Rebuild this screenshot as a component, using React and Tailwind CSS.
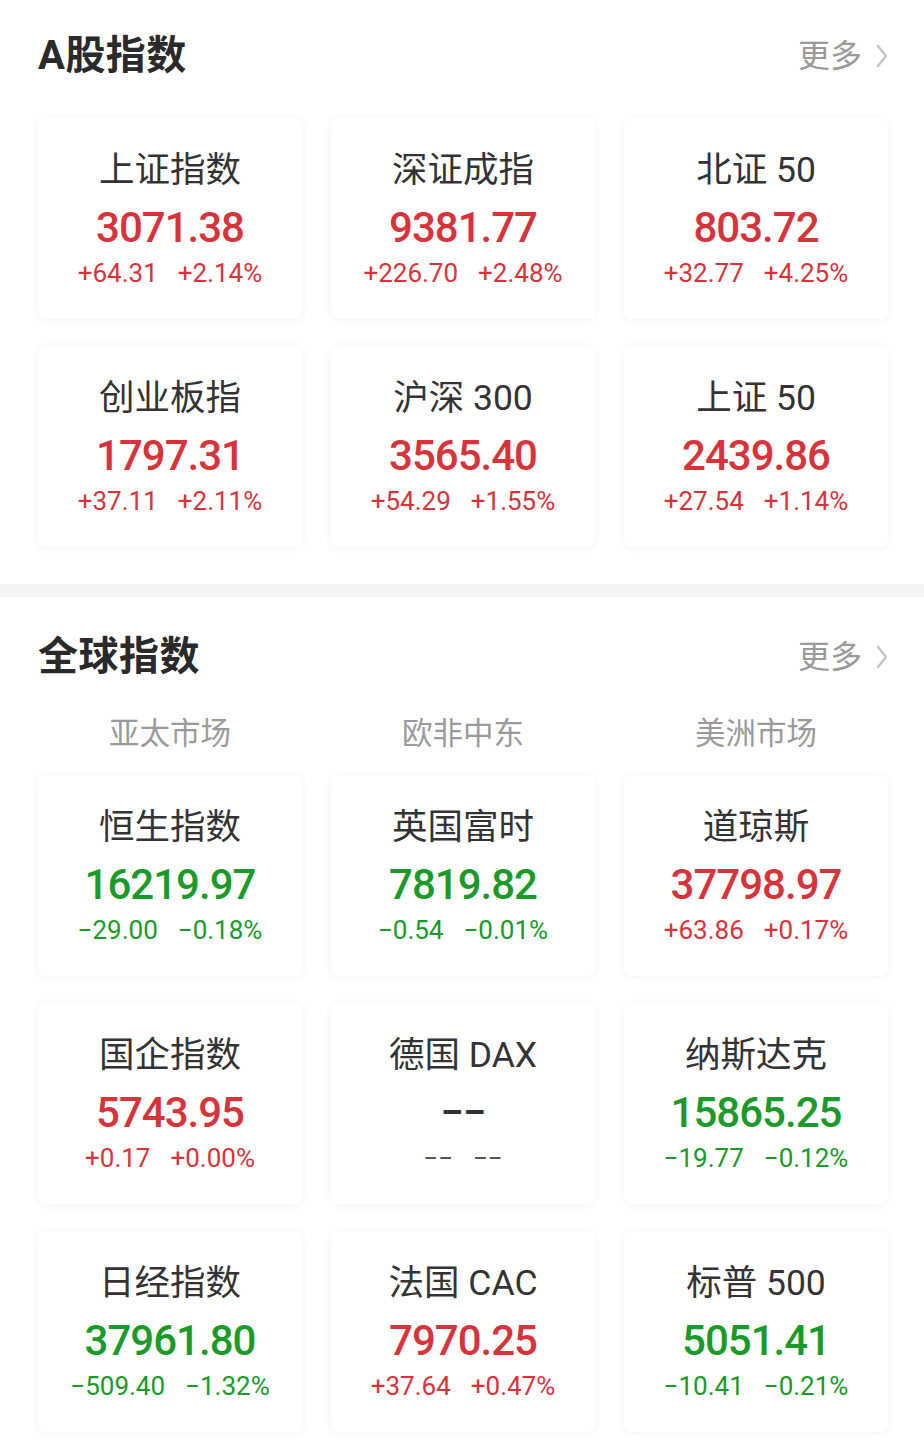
const FONT = { fontFamily: 'Roboto, "Noto Sans CJK SC", sans-serif' };

const aShares = [
  { name: "上证指数", value: "3071.38", change: "+64.31", pct: "+2.14%", up: true },
  { name: "深证成指", value: "9381.77", change: "+226.70", pct: "+2.48%", up: true },
  { name: "北证 50", value: "803.72", change: "+32.77", pct: "+4.25%", up: true },
  { name: "创业板指", value: "1797.31", change: "+37.11", pct: "+2.11%", up: true },
  { name: "沪深 300", value: "3565.40", change: "+54.29", pct: "+1.55%", up: true },
  { name: "上证 50", value: "2439.86", change: "+27.54", pct: "+1.14%", up: true },
];

const globalIdx = [
  { name: "恒生指数", value: "16219.97", change: "−29.00", pct: "−0.18%", up: false },
  { name: "英国富时", value: "7819.82", change: "−0.54", pct: "−0.01%", up: false },
  { name: "道琼斯", value: "37798.97", change: "+63.86", pct: "+0.17%", up: true },
  { name: "国企指数", value: "5743.95", change: "+0.17", pct: "+0.00%", up: true },
  { name: "德国 DAX", value: "−−", change: "−−", pct: "−−", up: null },
  { name: "纳斯达克", value: "15865.25", change: "−19.77", pct: "−0.12%", up: false },
  { name: "日经指数", value: "37961.80", change: "−509.40", pct: "−1.32%", up: false },
  { name: "法国 CAC", value: "7970.25", change: "+37.64", pct: "+0.47%", up: true },
  { name: "标普 500", value: "5051.41", change: "−10.41", pct: "−0.21%", up: false },
];

const colorOf = (up) => (up === null ? "text-[#333333]" : up ? "text-[#d8333a]" : "text-[#1a9a28]");

const MoreLink = () => (
  <div className="flex items-center gap-[14px] text-[32px] leading-[50px] text-[#9a9a9a]">
    <span>更多</span>
    <svg width="12" height="26" viewBox="0 0 12 26" fill="none">
      <path d="M2 3 L10 13 L2 23" stroke="#c4c4c4" strokeWidth="2.4" strokeLinecap="round" strokeLinejoin="round" />
    </svg>
  </div>
);

const IndexCard = ({ item }) => (
  <div className="flex h-[201px] flex-col items-center rounded-lg bg-white pt-[30px] shadow-[0_1px_10px_rgba(0,0,0,0.055)]">
    <div className="text-[35.5px] leading-[44px] text-[#333333]">{item.name}</div>
    <div className={`mt-1 text-[42px] font-medium leading-[64px] tracking-[-1px] ${colorOf(item.up)}`}>
      {item.value}
    </div>
    <div className={`-mt-[2px] flex gap-[20px] text-[26px] leading-[30px] ${item.up === null ? "text-[#555555]" : colorOf(item.up)}`}>
      <span>{item.change}</span>
      <span>{item.pct}</span>
    </div>
  </div>
);

const SectionHeader = ({ title }) => (
  <div className="flex items-center justify-between">
    <h2 className="text-[40px] font-bold leading-[50px] tracking-[0.5px] text-[#2a2a2a]">{title}</h2>
    <MoreLink />
  </div>
);

export default function App() {
  return (
    <div className="min-h-[1456px] w-[924px] bg-white" style={FONT}>
      <section className="pb-[37px] pl-[38px] pr-[36px] pt-[31px]">
        <SectionHeader title="A股指数" />
        <div className="mt-[37px] grid grid-cols-3 gap-x-[29px] gap-y-[27px]">
          {aShares.map((item) => (
            <IndexCard key={item.name} item={item} />
          ))}
        </div>
      </section>

      <div className="h-[13px] bg-[#f4f4f4]" />

      <section className="pl-[38px] pr-[36px] pt-[35px]">
        <SectionHeader title="全球指数" />
        <div className="mt-[32px] grid grid-cols-3 gap-x-[29px] text-center text-[30.5px] leading-[40px] text-[#9a9a9a]">
          <div>亚太市场</div>
          <div>欧非中东</div>
          <div>美洲市场</div>
        </div>
        <div className="mt-[21px] grid grid-cols-3 gap-x-[29px] gap-y-[27px]">
          {globalIdx.map((item) => (
            <IndexCard key={item.name} item={item} />
          ))}
        </div>
      </section>
    </div>
  );
}
